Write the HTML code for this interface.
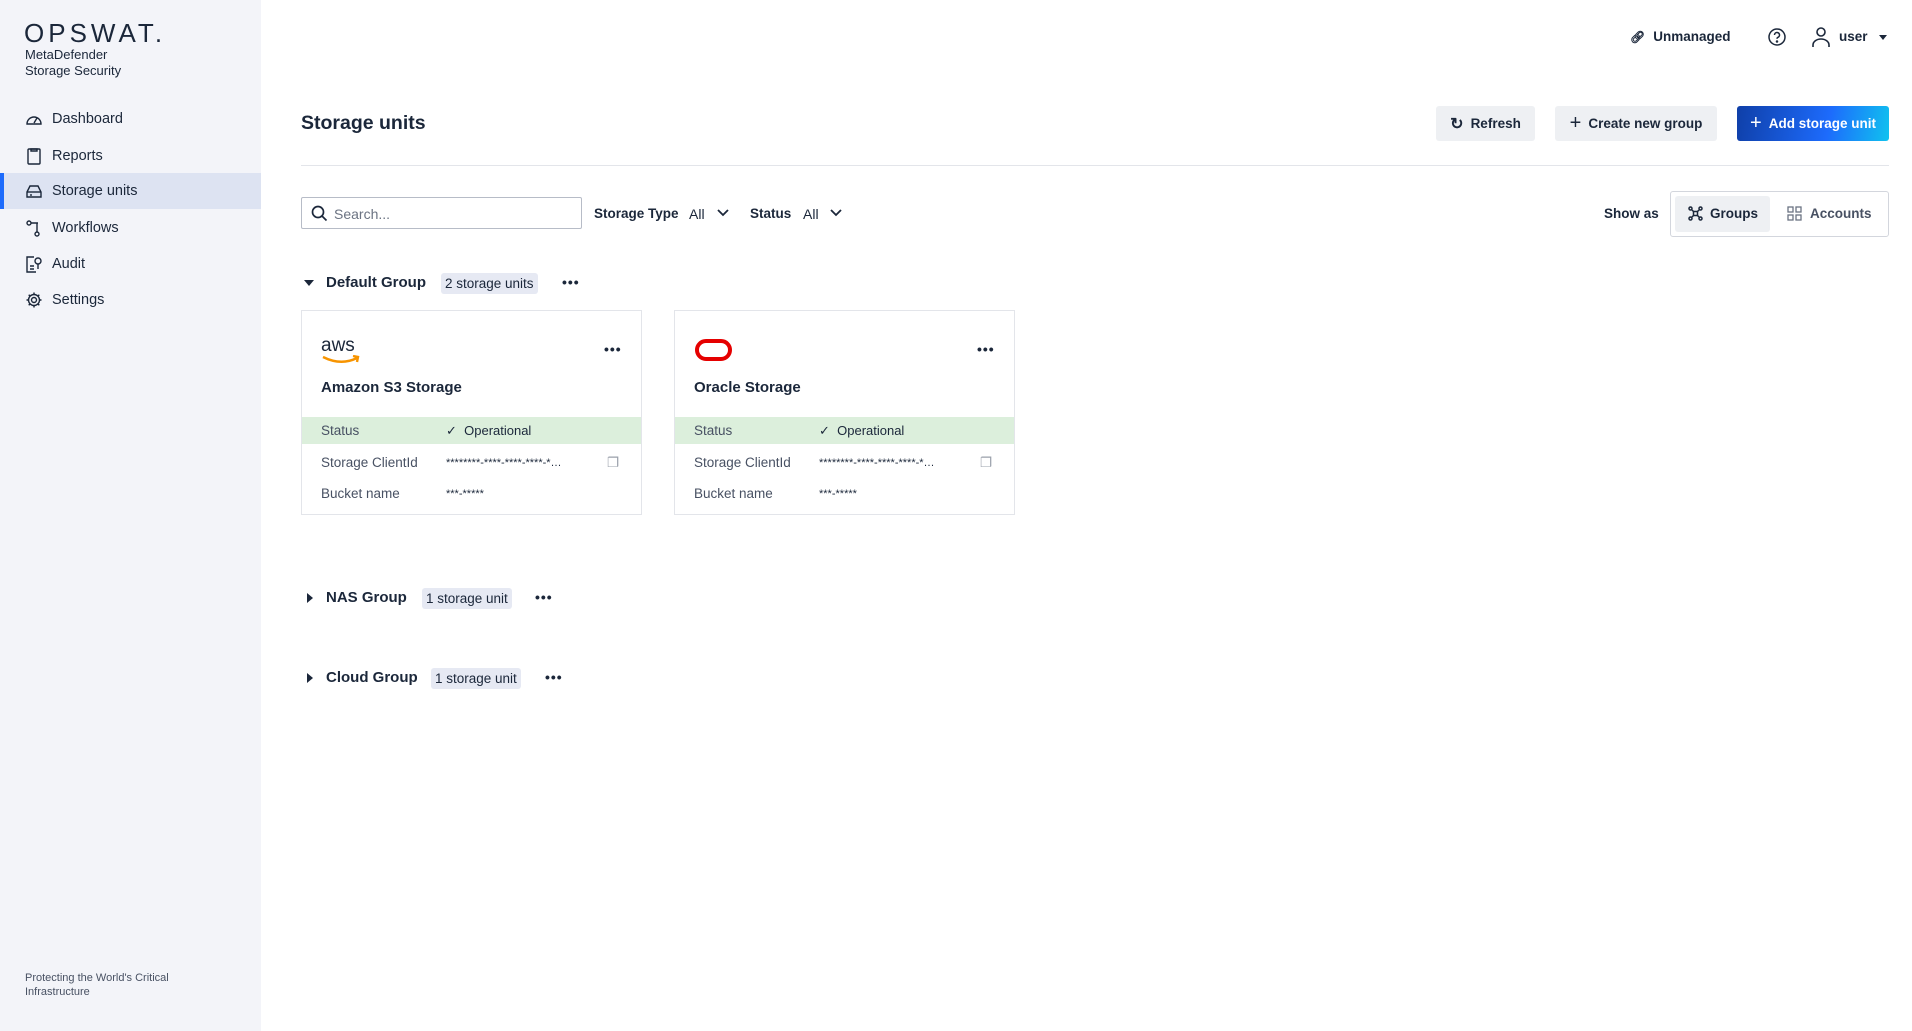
<!DOCTYPE html>
<html><head><meta charset="utf-8"><style>
*{box-sizing:border-box;margin:0;padding:0}
body{width:1912px;height:1031px;overflow:hidden;background:#fff;font-family:"Liberation Sans",sans-serif;color:#1b273a;position:relative}
.abs{position:absolute}
.side{left:0;top:0;width:261px;height:1031px;background:#f3f4f9}
.logo{left:24px;top:18px;font-size:26px;letter-spacing:4px;color:#1b273a}
.sub{left:25px;top:47px;font-size:13px;line-height:16px;color:#1b273a}
.nav{left:0;width:261px;height:36px;display:flex;align-items:center;padding-left:52px;font-size:14.5px;color:#1b273a}
.nav svg{position:absolute;left:25px;top:9px}
.nav.act{background:#dde3f2;border-left:4px solid #1d6bfc;padding-left:48px}
.nav.act svg{left:21px}
.foot{left:25px;top:971px;font-size:11px;line-height:14px;color:#485163}
.btn{height:35px;border-radius:3px;background:#eef0f3;display:flex;align-items:center;justify-content:center;font-size:13.5px;font-weight:bold;color:#1b273a;gap:7px}
.t14{font-size:14px}
.card{width:341px;height:205px;border:1px solid #e3e5ea;background:#fff}
.row{position:absolute;left:0;width:339px;height:27px;font-size:13.5px;display:flex;align-items:center}
.row .k{position:absolute;left:19px;color:#485163}
.row .v{position:absolute;left:144px;color:#1b273a;font-size:11px}
.badge{height:21px;background:#e6e9f3;border-radius:3px;font-size:13.5px;display:flex;align-items:center;padding:0 4px;color:#1b273a}
.gt{font-size:15px;font-weight:bold;color:#1b273a}
.dots{font-size:14px;font-weight:bold;letter-spacing:1px;color:#1b273a}
</style></head><body>
<div class="abs side"></div>
<div class="abs logo">OPSWAT.</div>
<div class="abs sub">MetaDefender<br>Storage Security</div>

<div class="abs nav" style="top:101px"><svg width="18" height="18" viewBox="0 0 18 18" fill="none" stroke="#1b273a" stroke-width="1.4"><path d="M2 14a7 7 0 0 1 14 0z"/><path d="M9 13l3-5"/></svg>Dashboard</div>
<div class="abs nav" style="top:138px"><svg width="18" height="18" viewBox="0 0 18 18" fill="none" stroke="#1b273a" stroke-width="1.4"><rect x="3" y="2" width="12" height="15" rx="1"/><path d="M6 2h6v2H6z"/></svg>Reports</div>
<div class="abs nav act" style="top:173px"><svg width="18" height="18" viewBox="0 0 18 18" fill="none" stroke="#1b273a" stroke-width="1.4"><path d="M2 10l3-6h8l3 6v5H2z"/><path d="M2 10h14"/><path d="M5 13h2"/></svg>Storage units</div>
<div class="abs nav" style="top:210px"><svg width="18" height="18" viewBox="0 0 18 18" fill="none" stroke="#1b273a" stroke-width="1.4"><circle cx="4" cy="4" r="2"/><circle cx="12" cy="15" r="2"/><path d="M6 4h7M12 4v9"/></svg>Workflows</div>
<div class="abs nav" style="top:246px"><svg width="18" height="18" viewBox="0 0 18 18" fill="none" stroke="#1b273a" stroke-width="1.4"><path d="M9 2H2v15h9"/><circle cx="13" cy="6" r="3"/><path d="M13 9v5M5 11h4M5 14h4"/></svg>Audit</div>
<div class="abs nav" style="top:282px"><svg width="18" height="18" viewBox="0 0 18 18" fill="none" stroke="#1b273a" stroke-width="1.4"><circle cx="9" cy="9" r="2.5"/><path d="M9 1.5v2.5M9 14v2.5M1.5 9H4M14 9h2.5M3.7 3.7l1.8 1.8M12.5 12.5l1.8 1.8M3.7 14.3l1.8-1.8M12.5 5.5l1.8-1.8"/><circle cx="9" cy="9" r="5.5"/></svg>Settings</div>
<div class="abs foot">Protecting the World's Critical<br>Infrastructure</div>

<div class="abs t14" style="left:1630px;top:29px;font-weight:bold;display:flex;align-items:center;gap:8px;font-size:13.5px"><span style="font-size:12px">&#x1F517;&#xFE0E;</span>Unmanaged</div>
<svg class="abs" style="left:1767px;top:27px" width="20" height="20" viewBox="0 0 20 20" fill="none" stroke="#1b273a" stroke-width="1.5"><circle cx="10" cy="10" r="8"/><path d="M7.5 8a2.5 2.5 0 1 1 3.5 2.3c-.7.3-1 .8-1 1.5"/><circle cx="10" cy="14.5" r=".5" fill="#1b273a"/></svg>
<svg class="abs" style="left:1811px;top:26px" width="20" height="22" viewBox="0 0 20 22" fill="none" stroke="#1b273a" stroke-width="1.6"><circle cx="10" cy="6" r="4"/><path d="M2 21v-2a8 6 0 0 1 16 0v2"/></svg>
<div class="abs t14" style="left:1839px;top:29px;font-weight:bold;font-size:13.5px">user</div>
<div class="abs" style="left:1879px;top:35px;border:4px solid transparent;border-top:5px solid #1b273a"></div>

<div class="abs" style="left:301px;top:112px;font-size:19.5px;font-weight:bold">Storage units</div>
<div class="abs btn" style="left:1436px;top:106px;width:99px"><span style="font-size:16px">&#x21BB;</span>Refresh</div>
<div class="abs btn" style="left:1555px;top:106px;width:162px"><span style="font-size:20px;font-weight:normal">+</span>Create new group</div>
<div class="abs btn" style="left:1737px;top:106px;width:152px;color:#fff;background:linear-gradient(100deg,#0f3fa8,#1d6bfc 60%,#10c2ef)"><span style="font-size:20px;font-weight:normal">+</span>Add storage unit</div>
<div class="abs" style="left:301px;top:165px;width:1588px;height:1px;background:#e3e5ea"></div>

<div class="abs" style="left:301px;top:197px;width:281px;height:32px;border:1px solid #b7bcc7;border-radius:2px"></div>
<svg class="abs" style="left:311px;top:205px" width="17" height="17" viewBox="0 0 17 17" fill="none" stroke="#1b273a" stroke-width="1.7"><circle cx="7" cy="7" r="5.5"/><path d="M11 11l4.5 4.5"/></svg>
<div class="abs t14" style="left:334px;top:206px;color:#6b7382">Search...</div>
<div class="abs t14" style="left:594px;top:206px;font-weight:bold;font-size:13.5px">Storage Type</div>
<div class="abs t14" style="left:689px;top:206px">All</div>
<svg class="abs" style="left:716px;top:208px" width="14" height="10" viewBox="0 0 14 10" fill="none" stroke="#1b273a" stroke-width="1.8"><path d="M2 2l5 5 5-5"/></svg>
<div class="abs t14" style="left:750px;top:206px;font-weight:bold;font-size:13.5px">Status</div>
<div class="abs t14" style="left:803px;top:206px">All</div>
<svg class="abs" style="left:829px;top:208px" width="14" height="10" viewBox="0 0 14 10" fill="none" stroke="#1b273a" stroke-width="1.8"><path d="M2 2l5 5 5-5"/></svg>

<div class="abs t14" style="left:1604px;top:206px;font-weight:bold;font-size:13.5px">Show as</div>
<div class="abs" style="left:1670px;top:191px;width:219px;height:46px;border:1px solid #d3d6dd;border-radius:3px"></div>
<div class="abs" style="left:1675px;top:196px;width:95px;height:36px;background:#eef0f3;border-radius:3px"></div>
<svg class="abs" style="left:1688px;top:206px" width="15" height="15" viewBox="0 0 15 15" fill="none" stroke="#1b273a" stroke-width="1.5"><circle cx="2.5" cy="2.5" r="1.5"/><circle cx="12.5" cy="2.5" r="1.5"/><circle cx="2.5" cy="12.5" r="1.5"/><circle cx="12.5" cy="12.5" r="1.5"/><path d="M4 4l2 2M11 4l-2 2M4 11l2-2M11 11l-2-2"/><rect x="5.5" y="5.5" width="4" height="4"/></svg>
<div class="abs t14" style="left:1710px;top:206px;font-weight:bold;font-size:13.5px">Groups</div>
<svg class="abs" style="left:1787px;top:206px" width="15" height="15" viewBox="0 0 15 15" fill="none" stroke="#6b7382" stroke-width="1.3"><rect x="1" y="1" width="5" height="5"/><rect x="9" y="1" width="5" height="5"/><rect x="1" y="9" width="5" height="5"/><rect x="9" y="9" width="5" height="5"/></svg>
<div class="abs t14" style="left:1810px;top:206px;color:#485163;font-weight:bold;font-size:13.5px">Accounts</div>

<div class="abs" style="left:304px;top:280px;border:5px solid transparent;border-top:6px solid #1b273a"></div>
<div class="abs gt" style="left:326px;top:274px">Default Group</div>
<div class="abs badge" style="left:441px;top:273px">2 storage units</div>
<div class="abs dots" style="left:562px;top:274px">&bull;&bull;&bull;</div>

<div class="abs card" style="left:301px;top:310px">
 <div class="abs" style="left:19px;top:24px;font-size:19px;color:#1b273a">aws</div>
 <svg class="abs" style="left:19px;top:44px" width="42" height="10" viewBox="0 0 42 10" fill="none" stroke="#f79400" stroke-width="2.4"><path d="M2 2q18 9 34 1"/><path d="M32 1l5 1-1 5"/></svg>
 <div class="abs dots" style="left:302px;top:30px">&bull;&bull;&bull;</div>
 <div class="abs" style="left:19px;top:68px;font-size:15px;font-weight:bold">Amazon S3 Storage</div>
 <div class="row" style="top:106px;background:#dcefdc"><span class="k">Status</span><span class="v" style="font-size:13px">&#10003;&nbsp;&nbsp;Operational</span></div>
 <div class="row" style="top:138px"><span class="k">Storage ClientId</span><span class="v">********-****-****-****-*…</span><span style="position:absolute;left:305px;color:#9aa0ab">&#x2750;</span></div>
 <div class="row" style="top:169px"><span class="k">Bucket name</span><span class="v">***-*****</span></div>
</div>

<div class="abs card" style="left:674px;top:310px">
 <div class="abs" style="left:20px;top:28px;width:37px;height:22px;border:4px solid #e50000;border-radius:11px"></div>
 <div class="abs dots" style="left:302px;top:30px">&bull;&bull;&bull;</div>
 <div class="abs" style="left:19px;top:68px;font-size:15px;font-weight:bold">Oracle Storage</div>
 <div class="row" style="top:106px;background:#dcefdc"><span class="k">Status</span><span class="v" style="font-size:13px">&#10003;&nbsp;&nbsp;Operational</span></div>
 <div class="row" style="top:138px"><span class="k">Storage ClientId</span><span class="v">********-****-****-****-*…</span><span style="position:absolute;left:305px;color:#9aa0ab">&#x2750;</span></div>
 <div class="row" style="top:169px"><span class="k">Bucket name</span><span class="v">***-*****</span></div>
</div>

<div class="abs" style="left:307px;top:593px;border:5px solid transparent;border-left:6px solid #1b273a"></div>
<div class="abs gt" style="left:326px;top:589px">NAS Group</div>
<div class="abs badge" style="left:422px;top:588px">1 storage unit</div>
<div class="abs dots" style="left:535px;top:589px">&bull;&bull;&bull;</div>

<div class="abs" style="left:307px;top:673px;border:5px solid transparent;border-left:6px solid #1b273a"></div>
<div class="abs gt" style="left:326px;top:669px">Cloud Group</div>
<div class="abs badge" style="left:431px;top:668px">1 storage unit</div>
<div class="abs dots" style="left:545px;top:669px">&bull;&bull;&bull;</div>
</body></html>
